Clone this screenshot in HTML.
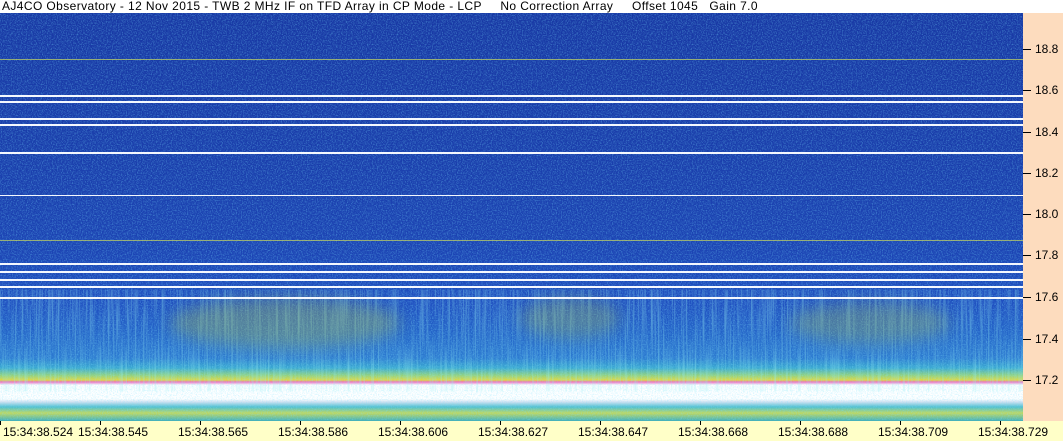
<!DOCTYPE html>
<html><head><style>
body{margin:0;width:1063px;height:441px;overflow:hidden;background:#fff;font-family:"Liberation Sans",sans-serif;position:relative}
.t{position:absolute;left:2px;top:0;font-size:12px;line-height:13px;color:#000;white-space:pre;letter-spacing:0.4px}
#sp{position:absolute;left:0;top:13px;width:1023px;height:408px;overflow:hidden;
background:linear-gradient(to bottom,#1838a4 0px,#1a3eac 150px,#1c44b4 240px,#2050c0 290px,#2464c8 320px,#2c7ad0 345px,#3aa8d0 355px,#8fd080 362px,#e0d840 367px,#f070c0 369px,#ffffff 372px,#ffffff 386px,#d0e0f0 389px,#50c0d0 394px,#c0d860 400px,#40b0c0 408px)}
.l{position:absolute;left:0;width:1023px;height:2px;background:#f4f8ff}
.y{position:absolute;left:0;width:1023px;height:1px;background:#c8d860;opacity:.7}
#rp{position:absolute;left:1023px;top:13px;width:40px;height:408px;background:#fddcbe}
#bp{position:absolute;left:0;top:421px;width:1063px;height:20px;background:#ffffc8}
.rt{position:absolute;left:1023px;width:8px;height:1px;background:#000}
.rl{position:absolute;left:1035px;font-size:12px;color:#000}
.bt{position:absolute;top:421px;width:1px;height:4px;background:#000}
.bl{position:absolute;top:425px;font-size:12px;color:#000}
.blob{position:absolute;border-radius:50%;filter:blur(8px)}
</style></head><body>
<div class="t">AJ4CO Observatory - 12 Nov 2015 - TWB 2 MHz IF on TFD Array in CP Mode - LCP     No Correction Array     Offset 1045   Gain 7.0</div>
<div id="sp">
<svg width="1023" height="408" style="position:absolute;left:0;top:0;opacity:.45">
<filter id="n"><feTurbulence type="fractalNoise" baseFrequency="0.8" numOctaves="2" seed="3"/><feColorMatrix values="0 0 0 0 0.2  0 0 0 0 0.75  0 0 0 0 1  2.2 0 0 0 -0.95"/></filter>
<filter id="v"><feTurbulence type="fractalNoise" baseFrequency="0.6 0.015" numOctaves="2" seed="7"/><feColorMatrix values="0 0 0 0 0.3  0 0 0 0 0.85  0 0 0 0 0.9  2.5 0 0 0 -1.1"/></filter>
<rect width="1023" height="370" filter="url(#n)"/>
<rect y="285" width="1023" height="85" filter="url(#v)"/>
</svg>
<div class="blob" style="left:170px;top:285px;width:230px;height:50px;background:rgba(170,190,80,.35)"></div>
<div class="blob" style="left:520px;top:285px;width:100px;height:40px;background:rgba(170,190,80,.3)"></div>
<div class="blob" style="left:790px;top:290px;width:160px;height:40px;background:rgba(170,190,80,.3)"></div>
<div class="l" style="top:82px"></div><div class="l" style="top:88px"></div>
<div class="l" style="top:105px"></div><div class="l" style="top:111px"></div>
<div class="l" style="top:139px"></div><div class="l" style="top:182px;height:1px"></div>
<div class="l" style="top:250px"></div><div class="l" style="top:258px"></div>
<div class="l" style="top:266px"></div><div class="l" style="top:273px"></div>
<div class="l" style="top:284px"></div>
<div class="y" style="top:46px"></div><div class="y" style="top:227px"></div>
</div>
<div id="rp"></div>
<div class="rt" style="top:49px"></div><div class="rl" style="top:42px">18.8</div>
<div class="rt" style="top:90px"></div><div class="rl" style="top:83px">18.6</div>
<div class="rt" style="top:132px"></div><div class="rl" style="top:125px">18.4</div>
<div class="rt" style="top:173px"></div><div class="rl" style="top:166px">18.2</div>
<div class="rt" style="top:214px"></div><div class="rl" style="top:207px">18.0</div>
<div class="rt" style="top:255px"></div><div class="rl" style="top:248px">17.8</div>
<div class="rt" style="top:297px"></div><div class="rl" style="top:290px">17.6</div>
<div class="rt" style="top:339px"></div><div class="rl" style="top:332px">17.4</div>
<div class="rt" style="top:380px"></div><div class="rl" style="top:373px">17.2</div>
<div id="bp"></div>
<div class="bt" style="left:0"></div><div class="bl" style="left:3px">15:34:38.524</div>
<div class="bt" style="left:100px"></div><div class="bl" style="left:78px">15:34:38.545</div>
<div class="bt" style="left:200px"></div><div class="bl" style="left:178px">15:34:38.565</div>
<div class="bt" style="left:300px"></div><div class="bl" style="left:278px">15:34:38.586</div>
<div class="bt" style="left:400px"></div><div class="bl" style="left:378px">15:34:38.606</div>
<div class="bt" style="left:500px"></div><div class="bl" style="left:478px">15:34:38.627</div>
<div class="bt" style="left:600px"></div><div class="bl" style="left:578px">15:34:38.647</div>
<div class="bt" style="left:700px"></div><div class="bl" style="left:678px">15:34:38.668</div>
<div class="bt" style="left:800px"></div><div class="bl" style="left:778px">15:34:38.688</div>
<div class="bt" style="left:900px"></div><div class="bl" style="left:878px">15:34:38.709</div>
<div class="bt" style="left:1000px"></div><div class="bl" style="left:978px">15:34:38.729</div>
</body></html>
